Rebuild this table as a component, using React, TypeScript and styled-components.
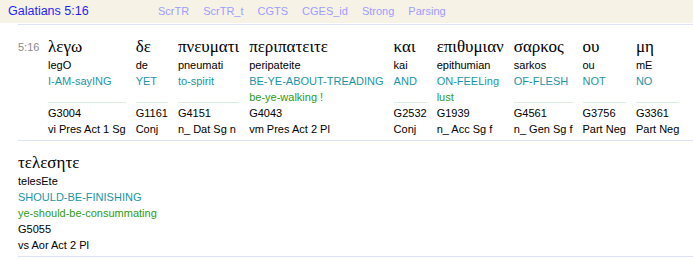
import React from "react";
import styled, { createGlobalStyle } from "styled-components";

const GlobalStyle = createGlobalStyle`
  html, body { margin: 0; padding: 0; background: #ffffff; }
  body { font-family: "Liberation Sans", Arial, sans-serif; }
`;

const Page = styled.div`
  width: 693px;
`;

const Header = styled.div`
  display: flex;
  align-items: center;
  height: 23px;
  background: #f7f2e6;
  margin-bottom: 1px;
`;

const Title = styled.div`
  width: 158px;
  box-sizing: border-box;
  padding-left: 8px;
  font-size: 12.5px;
  color: #1f1fff;
  line-height: 23px;
`;

const Links = styled.div`
  display: flex;
  gap: 14px;
`;

const LinkItem = styled.span`
  font-size: 11px;
  color: #9c9cff;
  line-height: 23px;
  cursor: pointer;
`;

const Verse = styled.div`
  margin-left: 18px;
  border-top: 1px solid #dee4f5;
`;

const Line = styled.div`
  display: flex;
  flex-wrap: nowrap;
  gap: 10px;
  padding: 12px 0 3px 0;
  height: 100px;
  border-bottom: 1px solid #dee4f5;
`;

const VerseNum = styled.div`
  width: 20px;
  font-size: 11px;
  color: #8a8a8a;
  line-height: 20px;
  padding-top: 1px;
  height: 19px;
  display: flex;
  align-items: flex-end;
`;

const Word = styled.div`
  display: flex;
  flex-direction: column;
`;

const Greek = styled.div`
  font-family: "Liberation Serif", "Times New Roman", serif;
  font-size: 17px;
  line-height: 20px;
  height: 20px;
  color: #000;
  white-space: nowrap;
`;

const Cell = styled.div<{ $tone?: "plain" | "teal" | "green" }>`
  font-size: 11px;
  line-height: 16px;
  height: 16px;
  white-space: nowrap;
  color: ${(p) =>
    p.$tone === "teal" ? "#1b95a6" : p.$tone === "green" ? "#2f9a12" : "#000"};
`;

const Spacer = styled.div`
  height: 13px;
  border-bottom: 1px solid #dcefdc;
  margin-bottom: 2px;
`;

type W = {
  g: string;
  t: string;
  e: string;
  l?: string;
  s: string;
  p: string;
};

const row1: W[] = [
  { g: "λεγω", t: "legO", e: "I-AM-sayING", s: "G3004", p: "vi Pres Act 1 Sg" },
  { g: "δε", t: "de", e: "YET", s: "G1161", p: "Conj" },
  { g: "πνευματι", t: "pneumati", e: "to-spirit", s: "G4151", p: "n_ Dat Sg n" },
  {
    g: "περιπατειτε",
    t: "peripateite",
    e: "BE-YE-ABOUT-TREADING",
    l: "be-ye-walking !",
    s: "G4043",
    p: "vm Pres Act 2 Pl",
  },
  { g: "και", t: "kai", e: "AND", s: "G2532", p: "Conj" },
  { g: "επιθυμιαν", t: "epithumian", e: "ON-FEELing", l: "lust", s: "G1939", p: "n_ Acc Sg f" },
  { g: "σαρκος", t: "sarkos", e: "OF-FLESH", s: "G4561", p: "n_ Gen Sg f" },
  { g: "ου", t: "ou", e: "NOT", s: "G3756", p: "Part Neg" },
  { g: "μη", t: "mE", e: "NO", s: "G3361", p: "Part Neg" },
];

const row2: W[] = [
  {
    g: "τελεσητε",
    t: "telesEte",
    e: "SHOULD-BE-FINISHING",
    l: "ye-should-be-consummating",
    s: "G5055",
    p: "vs Aor Act 2 Pl",
  },
];

const WordBlock = ({ w }: { w: W }) => (
  <Word>
    <Greek>{w.g}</Greek>
    <Cell>{w.t}</Cell>
    <Cell $tone="teal">{w.e}</Cell>
    {w.l ? <Cell $tone="green">{w.l}</Cell> : <Spacer />}
    <Cell>{w.s}</Cell>
    <Cell>{w.p}</Cell>
  </Word>
);

export default function App() {
  return (
    <Page>
      <GlobalStyle />
      <Header>
        <Title>Galatians 5:16</Title>
        <Links>
          {["ScrTR", "ScrTR_t", "CGTS", "CGES_id", "Strong", "Parsing"].map((l) => (
            <LinkItem key={l}>{l}</LinkItem>
          ))}
        </Links>
      </Header>
      <Verse>
        <Line>
          <VerseNum>5:16</VerseNum>
          {row1.map((w) => (
            <WordBlock key={w.g} w={w} />
          ))}
        </Line>
        <Line>
          {row2.map((w) => (
            <WordBlock key={w.g} w={w} />
          ))}
        </Line>
      </Verse>
    </Page>
  );
}
